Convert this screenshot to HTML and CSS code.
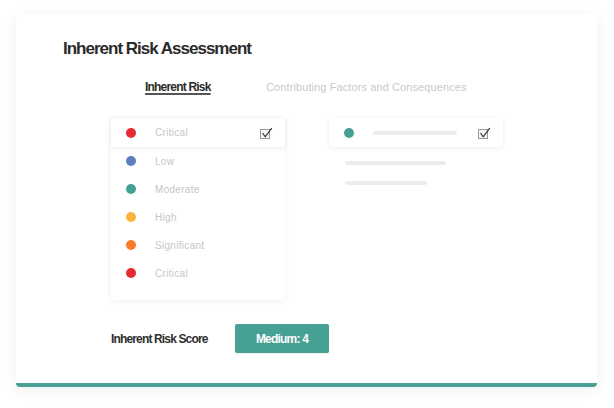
FILE: index.html
```html
<!DOCTYPE html>
<html>
<head>
<meta charset="utf-8">
<link rel="stylesheet" href="styles.css">
</head>
<body>
<div class="card">
  <h1 class="title">Inherent Risk Assessment</h1>
  <div class="tabs">
    <span class="tab active">Inherent Risk</span>
    <span class="tab">Contributing Factors and Consequences</span>
  </div>
  <div class="panels">
    <div class="panel list">
      <div class="row selected">
        <span class="dot red"></span><span class="label">Critical</span>
        <svg class="check" width="14" height="14" viewBox="0 0 14 14"><rect x="1.5" y="3.5" width="9" height="9" fill="#f4f4f4" stroke="#9a9a9a" stroke-width="1"/><path d="M3.5 7 L6.2 10.8 L12.8 2.2" fill="none" stroke="#333" stroke-width="1.2"/></svg>
      </div>
      <div class="row"><span class="dot blue"></span><span class="label">Low</span></div>
      <div class="row"><span class="dot teal"></span><span class="label">Moderate</span></div>
      <div class="row"><span class="dot yellow"></span><span class="label">High</span></div>
      <div class="row"><span class="dot orange"></span><span class="label">Significant</span></div>
      <div class="row"><span class="dot red"></span><span class="label">Critical</span></div>
    </div>
    <div class="panel side">
      <div class="row selected">
        <span class="dot teal"></span><span class="bar bar-main"></span>
        <svg class="check" width="14" height="14" viewBox="0 0 14 14"><rect x="1.5" y="3.5" width="9" height="9" fill="#f4f4f4" stroke="#9a9a9a" stroke-width="1"/><path d="M3.5 7 L6.2 10.8 L12.8 2.2" fill="none" stroke="#333" stroke-width="1.2"/></svg>
      </div>
      <div class="lines">
        <span class="bar bar-a"></span>
        <span class="bar bar-b"></span>
      </div>
    </div>
  </div>
  <div class="score">
    <span class="score-label">Inherent Risk Score</span>
    <span class="score-btn">Medium: 4</span>
  </div>
</div>
</body>
</html>
```
FILE: styles.css
```css
html, body {
  margin: 0;
  padding: 0;
  background: #ffffff;
}
body {
  width: 614px;
  height: 408px;
  overflow: hidden;
  font-family: "Liberation Sans", Arial, sans-serif;
}
.card {
  box-sizing: border-box;
  width: 581px;
  height: 373px;
  margin: 14px 0 0 16px;
  padding: 24px 0 30px 47px;
  background: #fff;
  border-radius: 4px;
  border-bottom: 4px solid #46a093;
  box-shadow: 0 3px 14px rgba(30, 40, 60, 0.07);
}
.title {
  margin: 0;
  font-family: "Liberation Sans", Arial, sans-serif;
  font-weight: bold;
  font-size: 17px;
  letter-spacing: -1px;
  line-height: 22px;
  color: #2b2b2b;
}
.tabs {
  display: flex;
  margin-top: 19px;
  padding-left: 82px;
  height: 16px;
}
.tab {
  font-size: 11px;
  line-height: 16px;
  color: #c9c9c9;
  letter-spacing: 0.1px;
  white-space: nowrap;
}
.tab.active {
  width: 121px;
  font-weight: bold;
  font-size: 12px;
  letter-spacing: -0.8px;
  color: #2b2b2b;
  text-decoration: underline;
  text-decoration-thickness: 1.5px;
  text-underline-offset: 2px;
  text-decoration-color: #555;
}
.panels {
  display: flex;
  gap: 44px;
  margin-top: 23px;
  margin-left: 48px;
  height: 182px;
}
.panel {
  width: 174px;
  box-sizing: border-box;
}
.list {
  box-shadow: 0 1px 6px rgba(30, 40, 60, 0.07);
  border-radius: 2px;
  padding-bottom: 13px;
}
.row {
  display: flex;
  align-items: center;
  height: 28px;
  padding: 0 12px 0 15px;
}
.row.selected {
  height: 29px;
  box-shadow: 0 1px 5px rgba(30, 40, 60, 0.09);
  border-radius: 2px;
}
.dot {
  width: 10px;
  height: 10px;
  border-radius: 50%;
  flex: none;
}
.red { background: #e52b2f; }
.blue { background: #5b7fc0; }
.teal { background: #45a095; }
.yellow { background: #fdb33d; }
.orange { background: #f97a2b; }
.label {
  margin-left: 19px;
  font-size: 10px;
  letter-spacing: 0.3px;
  color: #c6c6c6;
  flex: 1;
}
.check {
  flex: none;
  margin-left: auto;
}
.bar {
  display: block;
  height: 4px;
  border-radius: 2px;
  background: #ececec;
}
.bar-main {
  width: 84px;
  margin-left: 19px;
}
.lines {
  display: flex;
  flex-direction: column;
  gap: 16px;
  padding: 14px 0 0 16px;
}
.bar-a { width: 101px; }
.bar-b { width: 82px; }
.score {
  display: flex;
  align-items: center;
  margin-top: 24px;
  margin-left: 48px;
  height: 29px;
}
.score-label {
  font-weight: bold;
  font-size: 12px;
  letter-spacing: -0.85px;
  color: #2e2e2e;
  width: 124px;
  white-space: nowrap;
}
.score-btn {
  display: flex;
  align-items: center;
  justify-content: center;
  width: 94px;
  height: 29px;
  background: #46a093;
  border-radius: 2px;
  color: #fff;
  font-weight: bold;
  font-size: 12px;
  letter-spacing: -0.8px;
  box-shadow: 0 1px 2px rgba(0,0,0,0.08);
}
```
